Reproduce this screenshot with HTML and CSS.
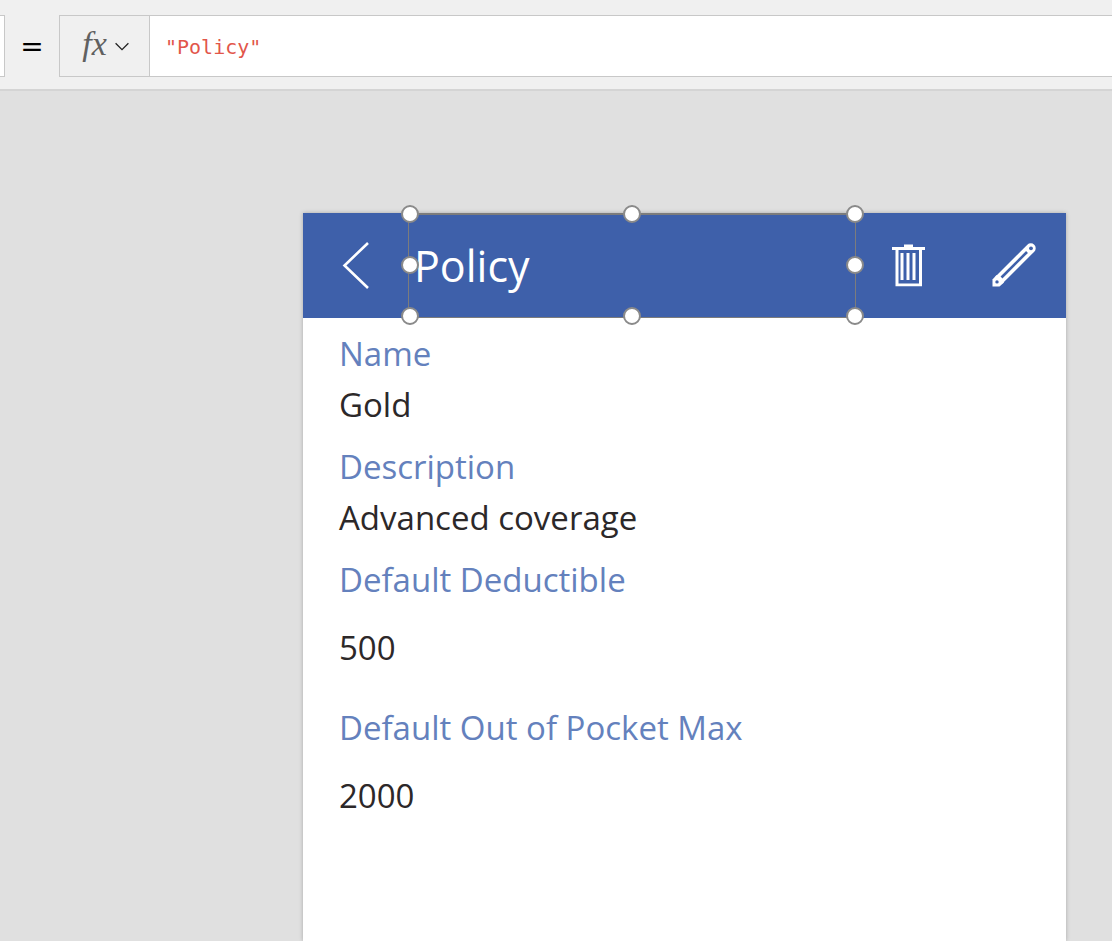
FILE: index.html
```html
<!DOCTYPE html>
<html lang="en">
<head>
<meta charset="utf-8">
<title>Policy</title>
<link rel="stylesheet" href="styles.css">
</head>
<body>
<div class="studio">
  <div class="formula-bar">
    <div class="property-box"></div>
    <span class="equals">=</span>
    <div class="formula-box">
      <button class="fx-button" type="button" aria-label="Insert function">
        <span class="fx">fx</span>
        <svg class="chevron" width="14" height="9" viewBox="0 0 14 9" fill="none" stroke="#222" stroke-width="1.3"><path d="M.6 1.200 7 7.600l6.400-6.400"/></svg>
      </button>
      <input class="formula-input" type="text" aria-label="Formula" spellcheck="false" value="&quot;Policy&quot;">
    </div>
  </div>
  <main class="canvas">
    <section class="screen">
      <header class="screen-header">
        <button class="icon-button" type="button" aria-label="Back">
          <svg width="49" height="49" viewBox="0 0 49 49" fill="none" stroke="#fff" stroke-width="2.600"><path d="M37 2 13.500 24.500 37 47"/></svg>
        </button>
        <div class="title-box">
          <h1 class="title">Policy</h1>
          <span class="handle top left"></span>
          <span class="handle top center"></span>
          <span class="handle top right"></span>
          <span class="handle middle left"></span>
          <span class="handle middle right"></span>
          <span class="handle bottom left"></span>
          <span class="handle bottom center"></span>
          <span class="handle bottom right"></span>
        </div>
        <button class="icon-button" type="button" aria-label="Delete">
          <svg width="35" height="43" viewBox="0 0 35 43" fill="#fff"><path d="M13 .5h9V3h12v3h-3v36.300H4.500V6H1V3H13zM7.500 6v33.500H28V6z" fill-rule="evenodd"/><path d="M9.500 9h3v27h-3zM15.500 9h3v27h-3zM21.500 9h3v27h-3z"/></svg>
        </button>
        <button class="icon-button" type="button" aria-label="Edit">
          <svg width="47" height="47" viewBox="-1 0 47 47" fill="none">
            <path d="M39.800 6.200 8.500 37.500" stroke="#fff" stroke-width="9.800" stroke-linecap="round"/>
            <path d="M1.500 44.500v-7l4-4.500 7.500 7.500-4.500 4z" fill="#fff"/>
            <path d="M10.500 35.500 36 10" stroke="#3e60aa" stroke-width="2.600"/>
            <circle cx="40" cy="6.300" r="1.900" fill="#3e60aa"/>
            <circle cx="6" cy="39.900" r="1.700" fill="#3e60aa"/>
          </svg>
        </button>
      </header>
      <dl class="fields">
        <div class="field"><dt>Name</dt><dd>Gold</dd></div>
        <div class="field"><dt>Description</dt><dd>Advanced coverage</dd></div>
        <div class="field number"><dt>Default Deductible</dt><dd>500</dd></div>
        <div class="field number"><dt>Default Out of Pocket Max</dt><dd>2000</dd></div>
      </dl>
    </section>
  </main>
</div>
</body>
</html>
```
FILE: styles.css
```css
* {
  box-sizing: border-box;
}

body {
  margin: 0;
  font-family: "Open Sans", sans-serif;
}

button {
  border: 0;
  padding: 0;
  background: none;
  cursor: pointer;
}

.studio {
  display: flex;
  flex-direction: column;
  height: 100vh;
  overflow: hidden;
  background: #e0e0e0;
}

.formula-bar {
  display: flex;
  flex: none;
  padding: 15px 0 12px;
  border-bottom: 2px solid #d4d4d4;
  background: #f0f0f0;
}

.property-box {
  width: 5px;
  border: 1px solid #c8c8c8;
  border-left: 0;
  background: #fff;
}

.equals {
  width: 54px;
  padding-top: 1px;
  font: 28px/61px "DejaVu Sans", sans-serif;
  text-align: center;
  color: #000;
}

.formula-box {
  display: flex;
  flex: 1;
  height: 62px;
  border: 1px solid #c8c8c8;
  border-right: 0;
  background: #fff;
}

.fx-button {
  display: flex;
  align-items: center;
  justify-content: center;
  gap: 8px;
  width: 90px;
  padding-left: 2px;
  border-right: 1px solid #c8c8c8;
  background: #f0f0f0;
}

.fx {
  padding-bottom: 4px;
  font: italic 34px/56px "Liberation Serif", serif;
  color: #606060;
}

.formula-input {
  flex: 1;
  min-width: 0;
  padding: 2px 15px 0;
  border: 0;
  outline: 0;
  background: transparent;
  font: 20px "DejaVu Sans Mono", monospace;
  color: #e2564a;
}

.canvas {
  flex: 1;
  display: flex;
  min-height: 0;
  padding: 122px 46px 0 303px;
}

.screen {
  flex: 1;
  min-width: 0;
  background: #fff;
  box-shadow: 0 0 4px rgba(0, 0, 0, 0.25);
}

.screen-header {
  display: flex;
  height: 105px;
  background: #3e60aa;
}

.icon-button {
  display: flex;
  align-items: center;
  justify-content: center;
  width: 105px;
}

.title-box {
  position: relative;
  display: flex;
  flex: 1;
  align-items: center;
  padding: 0 5px;
  border: 1px solid #7c7c7c;
  border-top-width: 2px;
}

.title {
  margin: 0;
  font-size: 43px;
  font-weight: 400;
  line-height: 60px;
  color: #fff;
}

.handle {
  position: absolute;
  width: 18px;
  height: 18px;
  border: 2px solid #8a8a8a;
  border-radius: 50%;
  background: #fff;
}

.top {
  top: -10px;
}

.middle {
  top: calc(50% - 10px);
}

.bottom {
  bottom: -8px;
}

.left {
  left: -8px;
}

.center {
  left: calc(50% - 9px);
}

.right {
  right: -9px;
}

.fields {
  display: flex;
  flex-direction: column;
  gap: 11px;
  margin: 0;
  padding: 10px 36px;
  font-size: 33px;
  line-height: 51px;
}

.field dt {
  color: #6481bd;
}

.field dd {
  margin: 0;
  color: #2c2829;
}

.number dd {
  padding: 17px 0 18px;
}
```
